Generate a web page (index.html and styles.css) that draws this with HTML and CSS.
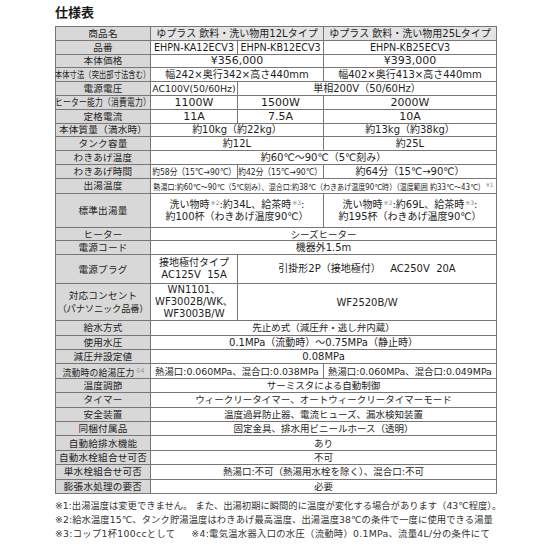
FILE: index.html
```html
<!DOCTYPE html>
<html lang="ja">
<head>
<meta charset="utf-8">
<title>仕様表</title>
<link rel="stylesheet" href="styles.css">
</head>
<body>
<div class="page">
  <div class="title">仕様表</div>
  <table class="spec">
    <colgroup><col class="c0"><col class="c1"><col class="c2"><col class="c3"></colgroup>
    <tr class="r hd"><th>商品名</th><td colspan="2" class="jp">ゆプラス 飲料・洗い物用12Lタイプ</td><td class="jp">ゆプラス 飲料・洗い物用25Lタイプ</td></tr>
    <tr class="r"><th>品番</th><td class="pn">EHPN-KA12ECV3</td><td class="pn">EHPN-KB12ECV3</td><td class="pn">EHPN-KB25ECV3</td></tr>
    <tr class="r"><th>本体価格</th><td colspan="2" class="big">¥356,000</td><td class="big">¥393,000</td></tr>
    <tr class="r"><th><div class="fit"><span class="cx s75">本体寸法（突出部寸法含む）</span></div></th><td colspan="2" class="md">幅242×奥行342×高さ440mm</td><td class="md">幅402×奥行413×高さ440mm</td></tr>
    <tr class="r"><th>電源電圧</th><td class="sm">AC100V(50/60Hz)</td><td colspan="2" class="md">単相200V（50/60Hz）</td></tr>
    <tr class="r"><th><div class="fit"><span class="cx s80">ヒーター能力（消費電力）</span></div></th><td class="big">1100W</td><td class="big">1500W</td><td class="big">2000W</td></tr>
    <tr class="r"><th>定格電流</th><td class="big">11A</td><td class="big">7.5A</td><td class="big">10A</td></tr>
    <tr class="r"><th>本体質量（満水時）</th><td colspan="2" class="md">約10kg（約22kg）</td><td class="md">約13kg（約38kg）</td></tr>
    <tr class="r"><th>タンク容量</th><td colspan="2" class="md">約12L</td><td class="md">約25L</td></tr>
    <tr class="r"><th>わきあげ温度</th><td colspan="3" class="md">約60℃～90℃（5℃刻み）</td></tr>
    <tr class="r"><th>わきあげ時間</th><td><div class="fit"><span class="cx s78">約58分（15℃→90℃）</span></div></td><td><div class="fit"><span class="cx s78">約42分（15℃→90℃）</span></div></td><td class="md">約64分（15℃→90℃）</td></tr>
    <tr class="r"><th>出湯温度</th><td colspan="3"><div class="fit"><span class="cx s83 tiny">熱湯口:約60℃～90℃（5℃刻み）、混合口:約38℃（わきあげ温度90℃時）（温度範囲 約33℃～43℃）<span class="sup">※1</span></span></div></td></tr>
    <tr class="std"><th>標準出湯量</th><td colspan="2" class="md">洗い物時<span class="sup">※2</span>:約34L、給茶時<span class="sup">※3</span>:<br>約100杯（わきあげ温度90℃）</td><td class="md">洗い物時<span class="sup">※2</span>:約69L、給茶時<span class="sup">※3</span>:<br>約195杯（わきあげ温度90℃）</td></tr>
    <tr class="rm"><th>ヒーター</th><td colspan="3">シーズヒーター</td></tr>
    <tr class="rm"><th>電源コード</th><td colspan="3" class="md">機器外1.5m</td></tr>
    <tr class="plug"><th>電源プラグ</th><td class="two md">接地極付タイプ<br>AC125V&nbsp;&nbsp;15A</td><td colspan="2" class="md">引掛形2P（接地極付）&nbsp;&nbsp;&nbsp;AC250V&nbsp;&nbsp;20A</td></tr>
    <tr class="outlet"><th>対応コンセント<br><span class="pana">（パナソニック品番）</span></th><td class="three">WN1101、<br>WF3002B/WK、<br>WF3003B/W</td><td colspan="2" class="md">WF2520B/W</td></tr>
    <tr class="rb"><th>給水方式</th><td colspan="3">先止め式（減圧弁・逃し弁内蔵）</td></tr>
    <tr class="rb"><th>使用水圧</th><td colspan="3" class="md">0.1MPa（流動時）～0.75MPa（静止時）</td></tr>
    <tr class="rb"><th>減圧弁設定値</th><td colspan="3" class="md">0.08MPa</td></tr>
    <tr class="rb"><th><div class="fit"><span class="cx s92">流動時の給湯圧力<span class="sup">※4</span></span></div></th><td colspan="2" class="sm">熱湯口:0.060MPa、混合口:0.038MPa</td><td class="sm">熱湯口:0.060MPa、混合口:0.049MPa</td></tr>
    <tr class="rb"><th>温度調節</th><td colspan="3">サーミスタによる自動制御</td></tr>
    <tr class="rb"><th>タイマー</th><td colspan="3">ウィークリータイマー、オートウィークリータイマーモード</td></tr>
    <tr class="rb"><th>安全装置</th><td colspan="3">温度過昇防止器、電流ヒューズ、漏水検知装置</td></tr>
    <tr class="rb"><th>同梱付属品</th><td colspan="3">固定金具、排水用ビニールホース（透明）</td></tr>
    <tr class="rb"><th>自動給排水機能</th><td colspan="3">あり</td></tr>
    <tr class="rb"><th>自動水栓組合せ可否</th><td colspan="3">不可</td></tr>
    <tr class="rb"><th>単水栓組合せ可否</th><td colspan="3">熱湯口:不可（熱湯用水栓を除く）、混合口:不可</td></tr>
    <tr class="rb"><th>膨張水処理の要否</th><td colspan="3">必要</td></tr>
  </table>
  <div class="notes">
    <p>※1:出湯温度は変更できません。 また、出湯初期に瞬間的に温度が変化する場合があります（43℃程度）。</p>
    <p class="wide2">※2:給水温度15℃、タンク貯湯温度はわきあげ最高温度、出湯温度38℃の条件で一度に使用できる湯量</p>
    <p class="wide3">※3:コップ1杯100ccとして<span class="gap"></span>※4:電気温水器入口の水圧（流動時）0.1MPa、流量4L/分の条件にて</p>
  </div>
</div>
</body>
</html>
```
FILE: styles.css
```css
body {
  margin: 0;
  background: #ffffff;
  color: #1e1e1e;
  font-family: "DejaVu Sans", "Noto Sans CJK JP", sans-serif;
}
.page {
  padding: 4px 0 0 55px;
}
.title {
  font-family: "Noto Sans CJK JP", sans-serif;
  font-size: 13px;
  font-weight: bold;
  line-height: 15px;
  margin-bottom: 7px;
  color: #1a1a1a;
}
.spec {
  border-collapse: collapse;
  table-layout: fixed;
  width: 441px;
  border: 1px solid #555555;
}
.c0 { width: 95px; }
.c1 { width: 87px; }
.c2 { width: 86px; }
.c3 { width: 173px; }
.spec th,
.spec td {
  border: 1px solid #777777;
  padding: 0;
  text-align: center;
  vertical-align: middle;
  white-space: nowrap;
  line-height: 11px;
  overflow: visible;
}
.spec th {
  background: #d8d8d8;
  font-weight: normal;
  font-size: 9.6px;
  letter-spacing: 0.2px;
  font-family: "Noto Sans CJK JP", sans-serif;
  color: #1e1e1e;
}
.spec td {
  font-size: 9.5px;
}
.spec tr.hd td {
  background: #e4e4e4;
}
.r { height: 13.8px; }
.rb { height: 14.4px; }
.rm { height: 13.5px; }
.std { height: 34px; }
.plug { height: 29px; }
.outlet { height: 37.5px; }
.spec td.pn { font-size: 9.6px; }
.spec td.big { font-size: 11px; }
.spec td.md { font-size: 10px; }
.spec td.sm { font-size: 9.4px; }
.spec td.jp { font-size: 10px; }
.spec td.two { line-height: 12px; }
.spec td.three { line-height: 12px; font-size: 10px; }
.plug td, .plug th { line-height: 12px; }
.spec .outlet th { line-height: 13px; }
.pana { font-size: 9.3px; letter-spacing: -0.2px; }
.std td { line-height: 12px; }
.fit {
  display: flex;
  justify-content: center;
}
.cx {
  display: inline-block;
  transform-origin: center center;
  white-space: nowrap;
}
.s75 { transform: scaleX(0.75); font-size: 9.6px; }
.s78 { transform: scaleX(0.82); font-size: 9.4px; }
.s80 { transform: scaleX(0.8); font-size: 9.8px; }
.s83 { transform: scaleX(0.84); }
.s92 { transform: scaleX(0.92); }
.tiny { font-size: 8.4px; }
.sup {
  font-size: 6px;
  color: #888888;
  vertical-align: 3px;
  margin-left: 1px;
  letter-spacing: 0;
}
.notes {
  margin-top: 5px;
  font-family: "DejaVu Sans", "Noto Sans CJK JP", sans-serif;
  font-size: 9.3px;
  color: #333333;
}
.notes p {
  margin: 0;
  line-height: 14px;
  white-space: nowrap;
}
.notes .wide2 { letter-spacing: 0.1px; }
.notes .wide3 { letter-spacing: 0.3px; }
.gap {
  display: inline-block;
  width: 16px;
}
```
